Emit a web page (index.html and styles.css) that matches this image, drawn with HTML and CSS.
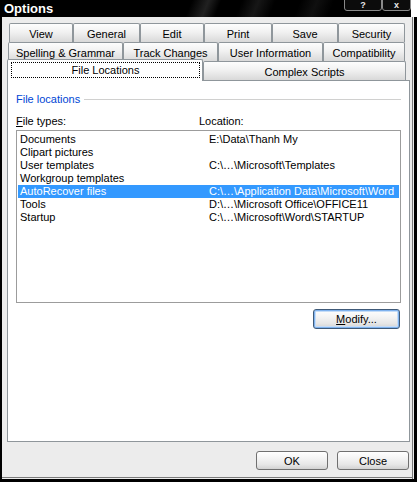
FILE: index.html
```html
<!DOCTYPE html>
<html>
<head>
<meta charset="utf-8">
<title>Options</title>
<link rel="stylesheet" href="styles.css">
</head>
<body>
<div class="window">
  <div class="titlebar">
    <span class="title">Options</span>
    <div class="caption-btns">
      <span class="cbtn cbtn-help">?</span>
      <span class="cbtn cbtn-close">x</span>
    </div>
  </div>
  <div class="client">
    <div class="tabs">
      <div class="tabrow row1">
        <div class="tab w64">View</div>
        <div class="tab w67">General</div>
        <div class="tab w64">Edit</div>
        <div class="tab w68">Print</div>
        <div class="tab w66">Save</div>
        <div class="tab w67">Security</div>
      </div>
      <div class="tabrow row2">
        <div class="tab w115">Spelling &amp; Grammar</div>
        <div class="tab w95">Track Changes</div>
        <div class="tab w105">User Information</div>
        <div class="tab w82">Compatibility</div>
      </div>
      <div class="tabrow row3">
        <div class="tab tab-active"><span class="focus">File Locations</span></div>
        <div class="tab w203">Complex Scripts</div>
      </div>
    </div>
    <div class="panel">
      <div class="group">
        <span class="group-label">File locations</span>
        <span class="group-line"></span>
      </div>
      <div class="colhead">
        <span><u>F</u>ile types:</span>
        <span>Location:</span>
      </div>
      <div class="list">
        <div class="item"><span>Documents</span><span>E:\Data\Thanh My</span></div>
        <div class="item"><span>Clipart pictures</span><span></span></div>
        <div class="item"><span>User templates</span><span>C:\…\Microsoft\Templates</span></div>
        <div class="item"><span>Workgroup templates</span><span></span></div>
        <div class="item selected"><span>AutoRecover files</span><span>C:\…\Application Data\Microsoft\Word</span></div>
        <div class="item"><span>Tools</span><span>D:\…\Microsoft Office\OFFICE11</span></div>
        <div class="item"><span>Startup</span><span>C:\…\Microsoft\Word\STARTUP</span></div>
      </div>
      <div class="modrow">
        <button class="btn btn-focus btn-modify"><u>M</u>odify...</button>
      </div>
    </div>
    <div class="footer">
      <button class="btn btn-dlg">OK</button>
      <button class="btn btn-dlg">Close</button>
    </div>
  </div>
</div>
</body>
</html>
```
FILE: styles.css
```css
* {
  box-sizing: border-box;
}

html, body {
  margin: 0;
  padding: 0;
  background: #ffffff;
}

body {
  font-family: "Liberation Sans", Arial, sans-serif;
  font-size: 11px;
  color: #000;
}

.window {
  width: 417px;
  height: 482px;
  display: flex;
  flex-direction: column;
}

/* ---------- title bar ---------- */
.titlebar {
  height: 17px;
  flex: none;
  margin-right: 6px;
  display: flex;
  align-items: flex-start;
  overflow: hidden;
  padding-left: 4px;
  background:
    linear-gradient(112deg, rgba(0,0,0,0) 46%, rgba(60,60,60,0.55) 50%, rgba(0,0,0,0) 53%, rgba(0,0,0,0) 58%, rgba(45,45,45,0.5) 62%, rgba(0,0,0,0) 66%, rgba(0,0,0,0) 72%, rgba(35,35,35,0.45) 76%, rgba(0,0,0,0) 80%),
    #000;
}

.title {
  color: #fff;
  font-weight: bold;
  font-size: 13px;
  line-height: 15px;
  padding-top: 1px;
}

.caption-btns {
  margin-left: auto;
  display: flex;
  margin-top: -9px;
}

.cbtn {
  display: block;
  height: 20px;
  border: 1px solid #8a8a8a;
  border-radius: 3px;
  background: #0c0c0c;
  color: #e8e8e8;
  font-weight: bold;
  font-size: 9px;
  line-height: 9px;
  padding-top: 9px;
  text-align: center;
}

.cbtn-help {
  width: 38px;
}

.cbtn-close {
  width: 29px;
}

/* ---------- client area ---------- */
.client {
  flex: 1;
  display: flex;
  flex-direction: column;
  background: #ececec;
  border-left: 2px solid #000;
  border-right: 3px solid #000;
  border-bottom: 3px solid #000;
  box-shadow: inset -1px 0 0 #ececec, inset -2px 0 0 #7a7a7a, inset 0 -1px 0 #ececec, inset 0 -2px 0 #7a7a7a;
  padding: 6px 0 0 5px;
}

/* ---------- tabs ---------- */
.tabs {
  display: flex;
  flex-direction: column;
}

.tabrow {
  display: flex;
  height: 19px;
  align-items: flex-start;
}

.row1 {
  margin-left: 2px;
}

.row2 {
  margin-left: 1px;
}

.tab {
  flex: none;
  height: 19px;
  border: 1px solid #8f969b;
  border-bottom: none;
  border-radius: 2px 2px 0 0;
  background: linear-gradient(#fdfdfd, #f1f1f1 45%, #d9d9d9);
  text-align: center;
  padding-top: 2px;
  line-height: 16px;
  white-space: nowrap;
}

.w64 { width: 64px; }
.w66 { width: 66px; }
.w67 { width: 67px; }
.w68 { width: 68px; }
.w82 { width: 82px; }
.w95 { width: 95px; }
.w105 { width: 105px; }
.w115 { width: 115px; }
.w203 { width: 203px; }

.tab-active {
  position: relative;
  z-index: 1;
  width: 196px;
  height: 22px;
  margin-top: -2px;
  background: #fff;
  display: flex;
  padding: 2px 2px 3px 3px;
}

.focus {
  flex: 1;
  border: 1px dotted #000;
  line-height: 15px;
  text-align: center;
}

/* ---------- panel ---------- */
.panel {
  width: 403px;
  height: 362px;
  flex: none;
  background: #fff;
  border: 1px solid #8f969b;
  padding: 12px 8px 0 8px;
  display: flex;
  flex-direction: column;
}

.group {
  display: flex;
  align-items: center;
  height: 13px;
  line-height: 13px;
}

.group-label {
  color: #0046d5;
}

.group-line {
  flex: 1;
  height: 1px;
  background: #d0d0cf;
  margin-left: 4px;
}

.colhead {
  margin-top: 9px;
  display: grid;
  grid-template-columns: 183px 1fr;
  height: 13px;
  line-height: 13px;
}

.list {
  margin-top: 2px;
  height: 173px;
  border: 1px solid #9c9c9c;
  padding: 2px 1px;
  background: #fff;
}

.item {
  display: grid;
  grid-template-columns: 189px 1fr;
  height: 13px;
  line-height: 12px;
  padding-left: 2px;
  white-space: nowrap;
}

.item.selected {
  background: #3399ff;
  color: #fff;
}

.modrow {
  display: flex;
  justify-content: flex-end;
  margin-top: 6px;
  padding-right: 1px;
}

/* ---------- buttons ---------- */
.btn {
  font-family: "Liberation Sans", Arial, sans-serif;
  font-size: 11px;
  color: #000;
  border: 1px solid #707070;
  border-radius: 3px;
  background: linear-gradient(#ffffff, #f3f3f3 40%, #e6e6e6 75%, #d2d2d2);
  padding: 0;
  margin: 0;
  text-align: center;
  line-height: 16px;
}

.btn-modify {
  width: 87px;
  height: 20px;
}

.btn-focus {
  border-color: #3f5a78;
  box-shadow: inset 0 0 0 1px #7fb2ee, inset 0 0 0 2px #c6ddf7;
}

.footer {
  display: flex;
  justify-content: flex-end;
  gap: 9px;
  margin-top: 9px;
  margin-right: 5px;
}

.btn-dlg {
  width: 72px;
  height: 19px;
}
```
